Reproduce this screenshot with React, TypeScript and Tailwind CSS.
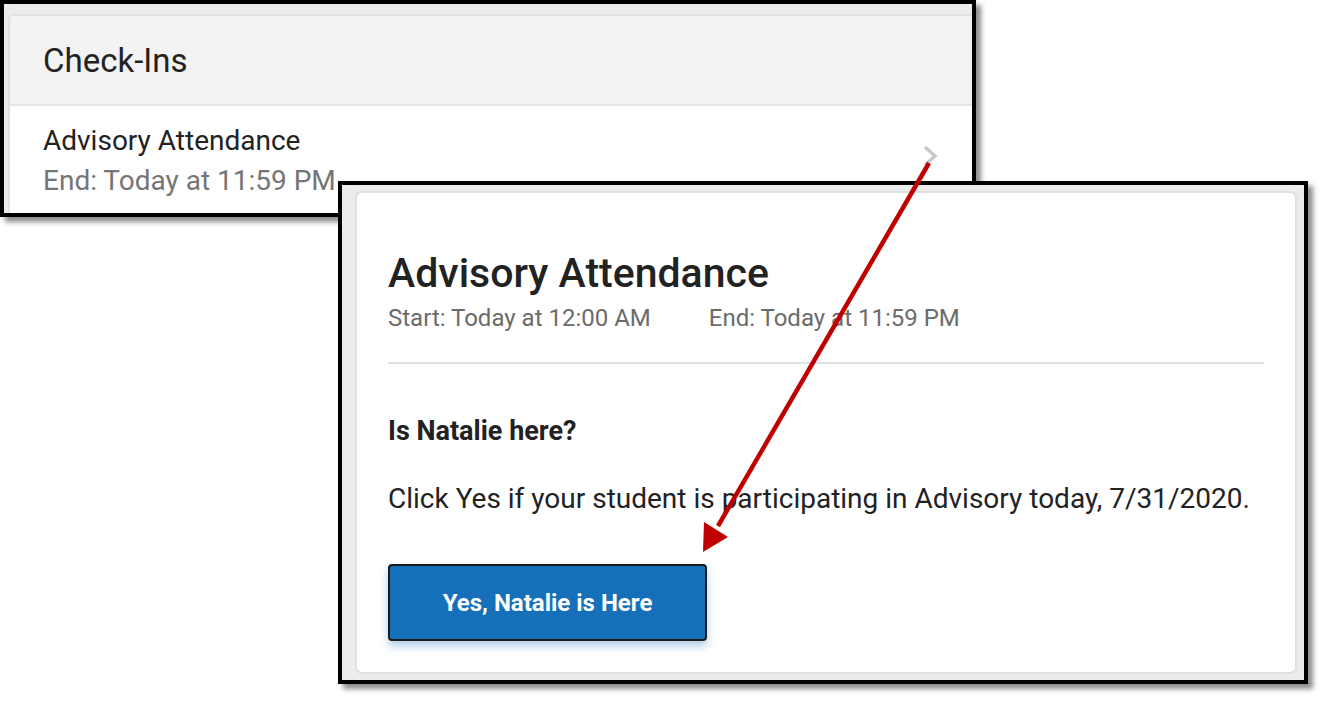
import React from 'react';

const font = "font-['Roboto','Liberation_Sans',sans-serif]";

const TopWindow: React.FC = () => (
  <div className="absolute left-0 top-0 h-[217px] w-[976px] border-4 border-black bg-[#ececec] pl-[4px] pt-[10px] shadow-[5px_5px_5px_rgba(0,0,0,0.45)]">
    <div className="flex h-full flex-col overflow-hidden rounded-tl-[6px] border-l-2 border-t-2 border-[#e2e2e2] bg-white">
      <div className="flex h-[90px] shrink-0 items-center border-b-2 border-[#e4e4e4] bg-[#f3f3f3] pl-[33px] text-[33px] leading-none text-[#222]">
        Check-Ins
      </div>
      <div className="flex flex-1 items-start justify-between pl-[33px] pr-[32px] pt-[15px]">
        <div className="flex flex-col">
          <span className="text-[28px] leading-[40px] text-[#222]">Advisory Attendance</span>
          <span className="text-[28px] leading-[40px] text-[#757575]">End: Today at 11:59 PM</span>
        </div>
        <svg width="18" height="22" viewBox="0 0 18 22" className="mt-[24px]">
          <path d="M3 2 L13 11 L3 20" fill="none" stroke="#c9c9c9" strokeWidth="3.5" />
        </svg>
      </div>
    </div>
  </div>
);

const BottomWindow: React.FC = () => (
  <div className="absolute left-[338px] top-[181px] h-[503px] w-[970px] border-4 border-black bg-[#ececec] pb-[6px] pl-[13px] pr-[7px] pt-[6px] shadow-[5px_5px_5px_rgba(0,0,0,0.45)]">
    <div className="flex h-full flex-col rounded-[7px] border-2 border-[#e0e0e0] bg-white px-[31px] pt-[55px]">
      <h1 className="text-[41px] font-medium leading-[50px] text-[#222]">Advisory Attendance</h1>
      <div className="mt-[6px] flex gap-[58px] text-[24px] leading-[28px] text-[#6b6b6b]">
        <span>Start: Today at 12:00 AM</span>
        <span>End: Today at 11:59 PM</span>
      </div>
      <div className="mt-[30px] h-[2px] bg-[#e2e2e2]" />
      <p className="mt-[52px] text-[27px] font-bold leading-[30px] text-[#222]">Is Natalie here?</p>
      <p className="mt-[37px] text-[28px] leading-[32px] text-[#222]">
        Click Yes if your student is participating in Advisory today, 7/31/2020.
      </p>
      <div className="mt-[49px]">
        <button className="flex h-[77px] w-[319px] items-center justify-center rounded-[4px] border-2 border-[#1b1b1b] bg-[#1570b9] text-[24px] font-bold text-white shadow-[0_5px_8px_rgba(21,112,185,0.35)]">
          Yes, Natalie is Here
        </button>
      </div>
    </div>
  </div>
);

const Arrow: React.FC = () => (
  <svg className="pointer-events-none absolute left-0 top-0" width="1323" height="709" viewBox="0 0 1323 709">
    <line x1="929" y1="163" x2="718" y2="526" stroke="#c00000" strokeWidth="4.5" />
    <polygon points="703,552 704,522 728,537" fill="#c00000" />
  </svg>
);

export default function App() {
  return (
    <div className={`relative h-[709px] w-[1323px] overflow-hidden bg-white ${font}`}>
      <TopWindow />
      <BottomWindow />
      <Arrow />
    </div>
  );
}
